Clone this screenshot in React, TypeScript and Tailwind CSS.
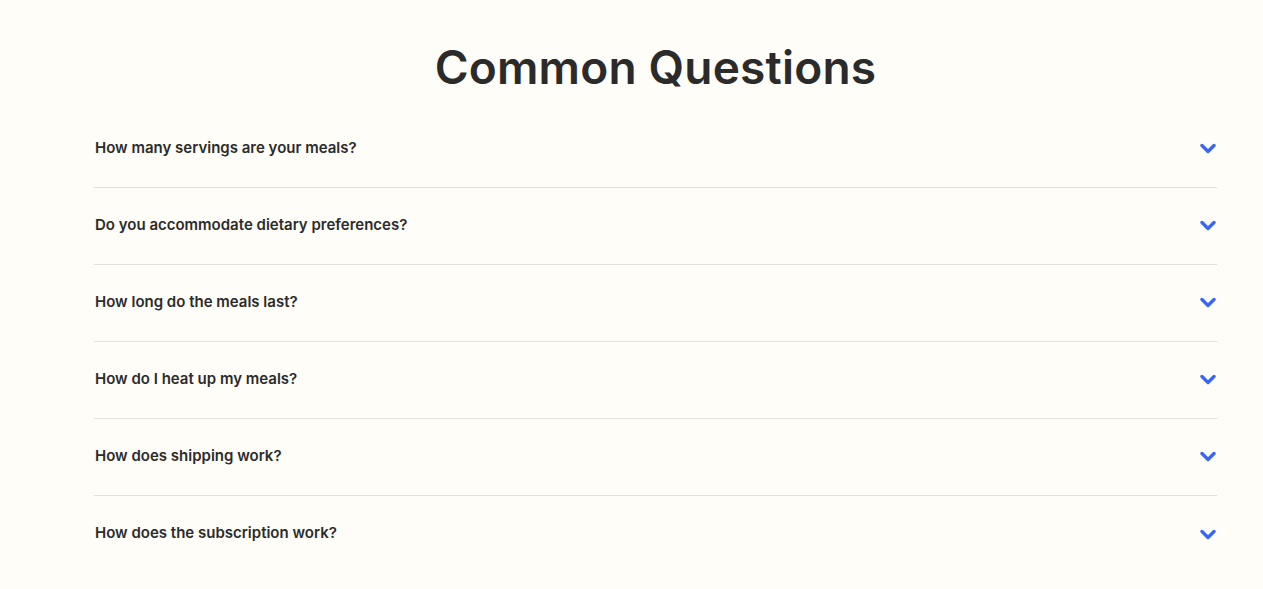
const questions = [
  "How many servings are your meals?",
  "Do you accommodate dietary preferences?",
  "How long do the meals last?",
  "How do I heat up my meals?",
  "How does shipping work?",
  "How does the subscription work?",
];

function Chevron() {
  return (
    <svg width="16" height="11" viewBox="0 0 16 11" className="text-[#3a66f5]">
      <path
        d="M2 2.5 L8 8.5 L14 2.5"
        fill="none"
        stroke="currentColor"
        strokeWidth="3.4"
        strokeLinecap="round"
        strokeLinejoin="round"
      />
    </svg>
  );
}

export default function App() {
  return (
    <div
      className="min-h-screen bg-[#fffdf8] text-[#2b2b2b] pl-[94px] pr-[46px]"
      style={{ fontFamily: "Inter, 'Liberation Sans', sans-serif" }}
    >
      <div className="pt-[39px]">
        <h1 className="text-center text-[46px] leading-[56px] font-semibold tracking-[0.2px]">
          Common Questions
        </h1>
      </div>
      <div className="mt-[16px]">
        {questions.map((q, i) => (
          <div
            key={q}
            className={
              i < questions.length - 1
                ? "flex h-[77px] items-center justify-between border-b border-[#e3e1dc] pb-[2px]"
                : "flex h-[77px] items-center justify-between pb-[2px]"
            }
          >
            <span className="pl-px text-[15px] font-semibold">{q}</span>
            <span className="mr-[1px] mt-[1px]">
              <Chevron />
            </span>
          </div>
        ))}
      </div>
    </div>
  );
}
